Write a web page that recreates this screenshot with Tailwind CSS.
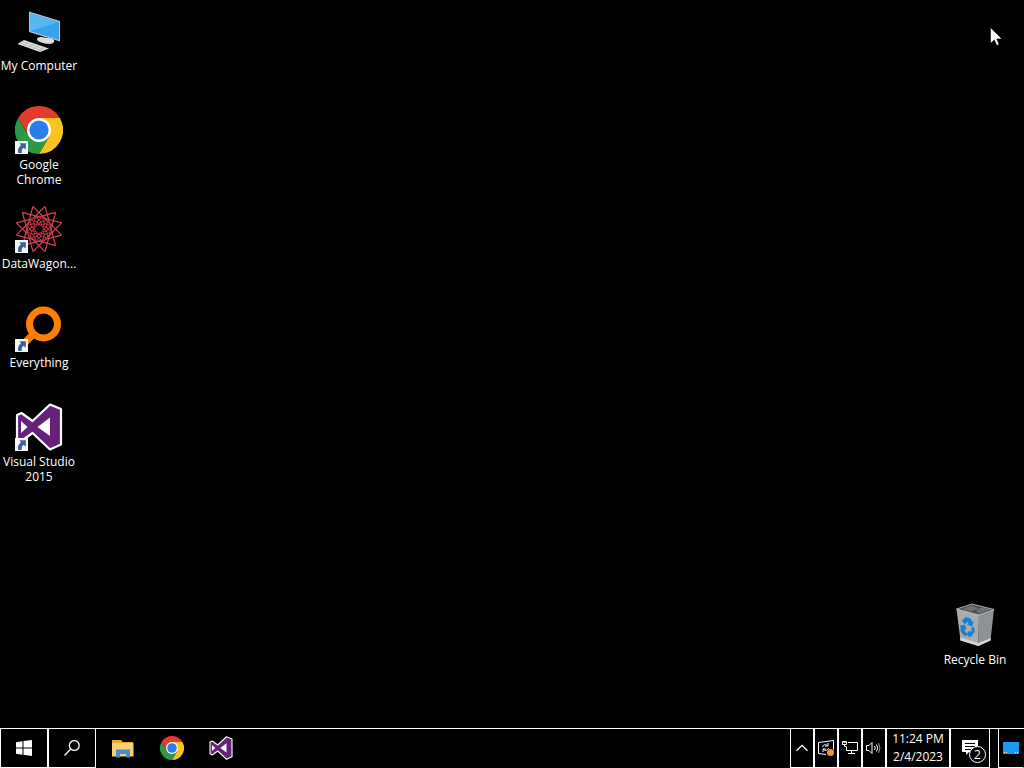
<!DOCTYPE html>
<html lang="en">
<head>
<meta charset="utf-8">
<title>Desktop</title>
<script src="https://cdn.jsdelivr.net/npm/@tailwindcss/browser@4"></script>
</head>
<body class="flex h-screen flex-col overflow-hidden bg-black font-['Open_Sans','Noto_Sans',sans-serif] text-xs text-white">
<svg class="hidden" aria-hidden="true">
  <symbol id="chrome" viewBox="0 0 48 48">
    <path fill="#e33b2e" d="M3.2 12A24 24 0 0 1 44.8 12H24L13.6 30z"/>
    <path fill="#fcc31e" d="M44.8 12A24 24 0 0 1 24 48L34.4 30 24 12z"/>
    <path fill="#2a9a48" d="M24 48A24 24 0 0 1 3.2 12L13.6 30H34.4z"/>
    <circle cx="24" cy="24" r="12" fill="#fff"/>
    <circle cx="24" cy="24" r="9.6" fill="#2b7de9"/>
  </symbol>
  <symbol id="vs" viewBox="0 0 48 48">
    <path fill="#68217a" stroke="#fff" stroke-width="2.2" stroke-linejoin="round" d="M35 1.5 46 6v35.500L35 46.500 17.500 30 6.500 38 2 35.500V12l4.500-2L17.500 18z"/>
    <path fill="#fff" d="M35 14.500v18.500L22.500 24zM6 18l6.500 6L6 30z"/>
  </symbol>
  <symbol id="shortcut" viewBox="0 0 12 12">
    <path fill="#f4f6fa" d="M0 0h12v12H0z"/>
    <path fill="#3c5f9c" d="M4 2h6v6L8 6.300C6.300 7.500 6 8.600 6.200 11H3C2.200 8 3.300 5.700 5.600 4z"/>
  </symbol>
</svg>

<main class="relative flex-1">
  <ul class="w-[78px] pt-[7px] text-center leading-[15px]">
    <li class="h-[99px]">
      <button class="flex w-full flex-col items-center gap-[3px]">
        <svg class="size-12" viewBox="0 0 48 48" aria-hidden="true">
          <path fill="#b9c4cb" d="M14 4.500 45 14v20.500L14 25z"/>
          <path fill="#d8dee2" d="m26 30 7 1c5 .500 7 2 6 4-1 2-5 2.500-9 1.500s-8-2.500-8-4 1-2.500 4-2.500z"/>
          <path fill="#36a4e8" d="M15 6 44 15v18L15 24z"/>
          <path fill="#5ab6f0" d="M15 6 44 15 15 24z"/>
          <path fill="#e2e5e8" d="m9 33 25 8.500-9 3.500L2.500 37z"/>
          <path fill="none" stroke="#a8adb1" stroke-width=".7" d="m7 34.500 23 8M5 36l23 8M14 35l-6 3.500M19 37l-6 3.500M24 38.500 18 42M29 40l-6 4"/>
        </svg>
        <span>My Computer</span>
      </button>
    </li>
    <li class="h-[99px]">
      <button class="flex w-full flex-col items-center gap-[3px]">
        <svg class="size-12" viewBox="0 0 48 48" aria-hidden="true">
          <use href="#chrome"/><use href="#shortcut" y="35" width="13" height="13"/>
        </svg>
        <span>Google<br>Chrome</span>
      </button>
    </li>
    <li class="h-[99px]">
      <button class="flex w-full flex-col items-center gap-[3px]">
        <svg class="size-12" viewBox="0 0 48 48" aria-hidden="true">
          <defs>
            <g id="ray" fill="none">
              <path stroke="#d04555" stroke-width="1.200" d="M24 .5 33.500 17M24 .5 14.500 17"/>
              <path stroke="#8a2630" stroke-width=".8" d="M33.500 17 36 21M14.500 17 12 21"/>
              <path stroke="#c23443" stroke-width="1" d="M24 11.500 28 17.500 24 20 20 17.500z"/>
            </g>
            <g id="ray-quad"><use href="#ray"/><use href="#ray" transform="rotate(90 24 24)"/><use href="#ray" transform="rotate(180 24 24)"/><use href="#ray" transform="rotate(270 24 24)"/></g>
          </defs>
          <use href="#ray-quad" transform="rotate(15 24 24)"/>
          <use href="#ray-quad" transform="rotate(45 24 24)"/>
          <use href="#ray-quad" transform="rotate(75 24 24)"/>
          <use href="#shortcut" y="35" width="13" height="13"/>
        </svg>
        <span>DataWagon...</span>
      </button>
    </li>
    <li class="h-[99px]">
      <button class="flex w-full flex-col items-center gap-[3px]">
        <svg class="size-12" viewBox="0 0 48 48" aria-hidden="true">
          <circle cx="28.500" cy="20" r="14" fill="none" stroke="#ff8000" stroke-width="7"/>
          <path stroke="#ff8000" stroke-width="7" d="M19 29.500 7 41.500"/>
          <use href="#shortcut" y="35" width="13" height="13"/>
        </svg>
        <span>Everything</span>
      </button>
    </li>
    <li class="h-[99px]">
      <button class="flex w-full flex-col items-center gap-[3px]">
        <svg class="size-12" viewBox="0 0 48 48" aria-hidden="true">
          <use href="#vs"/><use href="#shortcut" y="35" width="13" height="13"/>
        </svg>
        <span>Visual Studio<br>2015</span>
      </button>
    </li>
  </ul>

  <button class="absolute right-[10px] bottom-[61px] flex w-[78px] flex-col items-center gap-[3px] leading-[15px]">
    <svg class="size-12" viewBox="0 0 48 48" aria-hidden="true">
      <path fill="#4b4d4f" d="M5.500 8 21 3l22 5.500L28 14z"/>
      <path fill="#6f7274" d="m11 8 10-3.500 7 3-8 3zM25 10l6-4 8 2.500-11 4z"/>
      <path fill="#a9abad" d="M5.500 8 28 14 27.500 45 9.500 39.500z"/>
      <path fill="#8f9294" d="M43 8.500 28 14 27.500 45 39.500 39.500z"/>
      <path fill="#d4d6d8" d="m9 36.500 18.500 5.500 12.500-5-.5 2.500-12 5.500-18-5.500z"/>
      <path fill="none" stroke="#c9cccf" stroke-width=".8" d="M5.500 8 21 3l22 5.500L28 14z"/>
      <path fill="#1680d8" d="m11 20 3.500-4 5 1.500 2 3.500 1.500-.5-2 5-5-2 1.500-1-1.500-2-2 3zM9 24.500l5-.5 1.500 4.500-1.500-.5-.5 2 2.300 2-.5 3.500-3-1.500-3-4.500.5-2.500zM23 25.500l.8 5-2.800 4.500-2 .500v1.500L15.500 33l3.500-4v1.500l2-.3-1-2.700z"/>
    </svg>
    <span>Recycle Bin</span>
  </button>

  <svg class="absolute top-[27px] right-[22px] h-[19px] w-3" viewBox="0 0 12 19" aria-hidden="true">
    <path fill="#fff" stroke="#000" stroke-width=".6" d="M.5.5v16l3.800-3.600 2.500 5.600 2.400-1L6.800 12H12z"/>
  </svg>
</main>

<footer class="flex h-10 border-t border-white">
  <button aria-label="Start" class="grid w-12 place-items-center border-x border-b border-white">
    <svg class="size-4" viewBox="0 0 16 16" fill="#fff" aria-hidden="true"><path d="M0 2.200 6.500 1.300V7.500H0zM7.500 1.100 16 0v7.500H7.500zM0 8.500h6.500v6.200L0 13.800zM7.500 8.500H16V16l-8.500-1.200z"/></svg>
  </button>
  <button aria-label="Search" class="grid w-12 place-items-center border-x border-b border-white">
    <svg class="size-4" viewBox="0 0 16 16" fill="none" stroke="#fff" stroke-width="1.300" aria-hidden="true"><circle cx="10.300" cy="5.500" r="4.900"/><path d="M6.800 9 .5 15.500"/></svg>
  </button>
  <nav aria-label="Pinned apps" class="flex border-b border-transparent pl-[3px]">
    <button aria-label="File Explorer" class="grid w-12 place-items-center">
      <svg class="h-[19px] w-[22px]" viewBox="0 0 22 19" aria-hidden="true">
        <path fill="#e5a934" d="M0 1h9l1.500 2H21v4H0z"/>
        <path fill="#f8d070" d="M0 4h21.500v13.500H0z"/>
        <path fill="#3f8fcd" d="M4 10.500h14V18.500h-4V15H8v3.500H4z"/>
      </svg>
    </button>
    <button aria-label="Google Chrome" class="grid w-[50px] place-items-center">
      <svg class="size-6" aria-hidden="true"><use href="#chrome"/></svg>
    </button>
    <button aria-label="Visual Studio 2015" class="grid w-12 place-items-center">
      <svg class="size-6" aria-hidden="true"><use href="#vs"/></svg>
    </button>
  </nav>

  <div class="ml-auto flex">
    <button aria-label="Show hidden icons" class="grid w-6 place-items-center border-x border-b border-white">
      <svg class="h-2 w-3" viewBox="0 0 12 8" fill="none" stroke="#fff" stroke-width="1.300" aria-hidden="true"><path d="M.5 6.800 6 1.300l5.500 5.500"/></svg>
    </button>
    <button aria-label="Updates available" class="grid w-6 place-items-center border-x border-b border-white">
      <svg class="size-4" viewBox="0 0 16 16" fill="none" stroke="#fff" aria-hidden="true">
        <path d="M8 14.500.5 13.500v-11L15.500.5v9"/>
        <path d="M4.500 7c.5-2.500 3.500-3 5-1.500M10 3v3H7M10.500 8c-.5 2.500-3.500 3-5 1.500M5 12V9h3"/>
        <circle cx="12.500" cy="12.500" r="3.500" fill="#f7931e" stroke="none"/>
      </svg>
    </button>
    <button aria-label="Network" class="grid w-6 place-items-center border-x border-b border-white">
      <svg class="size-4" viewBox="0 0 16 16" fill="none" stroke="#fff" aria-hidden="true"><path d="M6 2.500h9.500v8H4.500V7M9.500 10.500v3M6 13.500h7M.5 1.500h4v3h-4zM2.500 4.500v2h2M1.500 2.500h2"/></svg>
    </button>
    <button aria-label="Volume" class="grid w-6 place-items-center border-x border-b border-white">
      <svg class="size-4" viewBox="0 0 16 16" fill="none" stroke="#fff" aria-hidden="true"><path d="M.5 5.500H3l3-3v11l-3-3H.500zM8.500 6q1.500 2 0 4M10.500 4.500q2.500 3.500 0 7"/><path stroke="#999" d="M12.500 3q3 5 0 10"/></svg>
    </button>
    <button class="w-16 border-x border-b border-white text-center leading-[18px]"><time datetime="2023-02-04T23:24">11:24 PM<br>2/4/2023</time></button>
    <button aria-label="Notifications, 2 new" class="relative w-10 border-x border-b border-white">
      <svg class="absolute top-[10px] left-[11px] h-4 w-[17px]" viewBox="0 0 17 16" aria-hidden="true"><path fill="#fff" d="M0 1h16v12H7l-3 3v-3H0z"/><path stroke="#000" d="M3 4.500h10M3 7.500h10M3 10.500h7"/></svg>
      <span class="absolute top-[17px] left-[18px] grid size-[17px] place-items-center rounded-full border border-white bg-black leading-none">2</span>
    </button>
    <button aria-label="Show desktop" class="ml-2 grid w-[26px] place-items-center border-x border-b border-white border-r-transparent">
      <svg class="h-3 w-4" viewBox="0 0 16 12" aria-hidden="true"><path fill="#1a9bf0" d="M0 0h16v12H0z"/><path stroke="#bfe3fb" stroke-dasharray="1 1" d="M1 10.500h3M12 10.500h3"/></svg>
    </button>
  </div>
</footer>
</body>
</html>
